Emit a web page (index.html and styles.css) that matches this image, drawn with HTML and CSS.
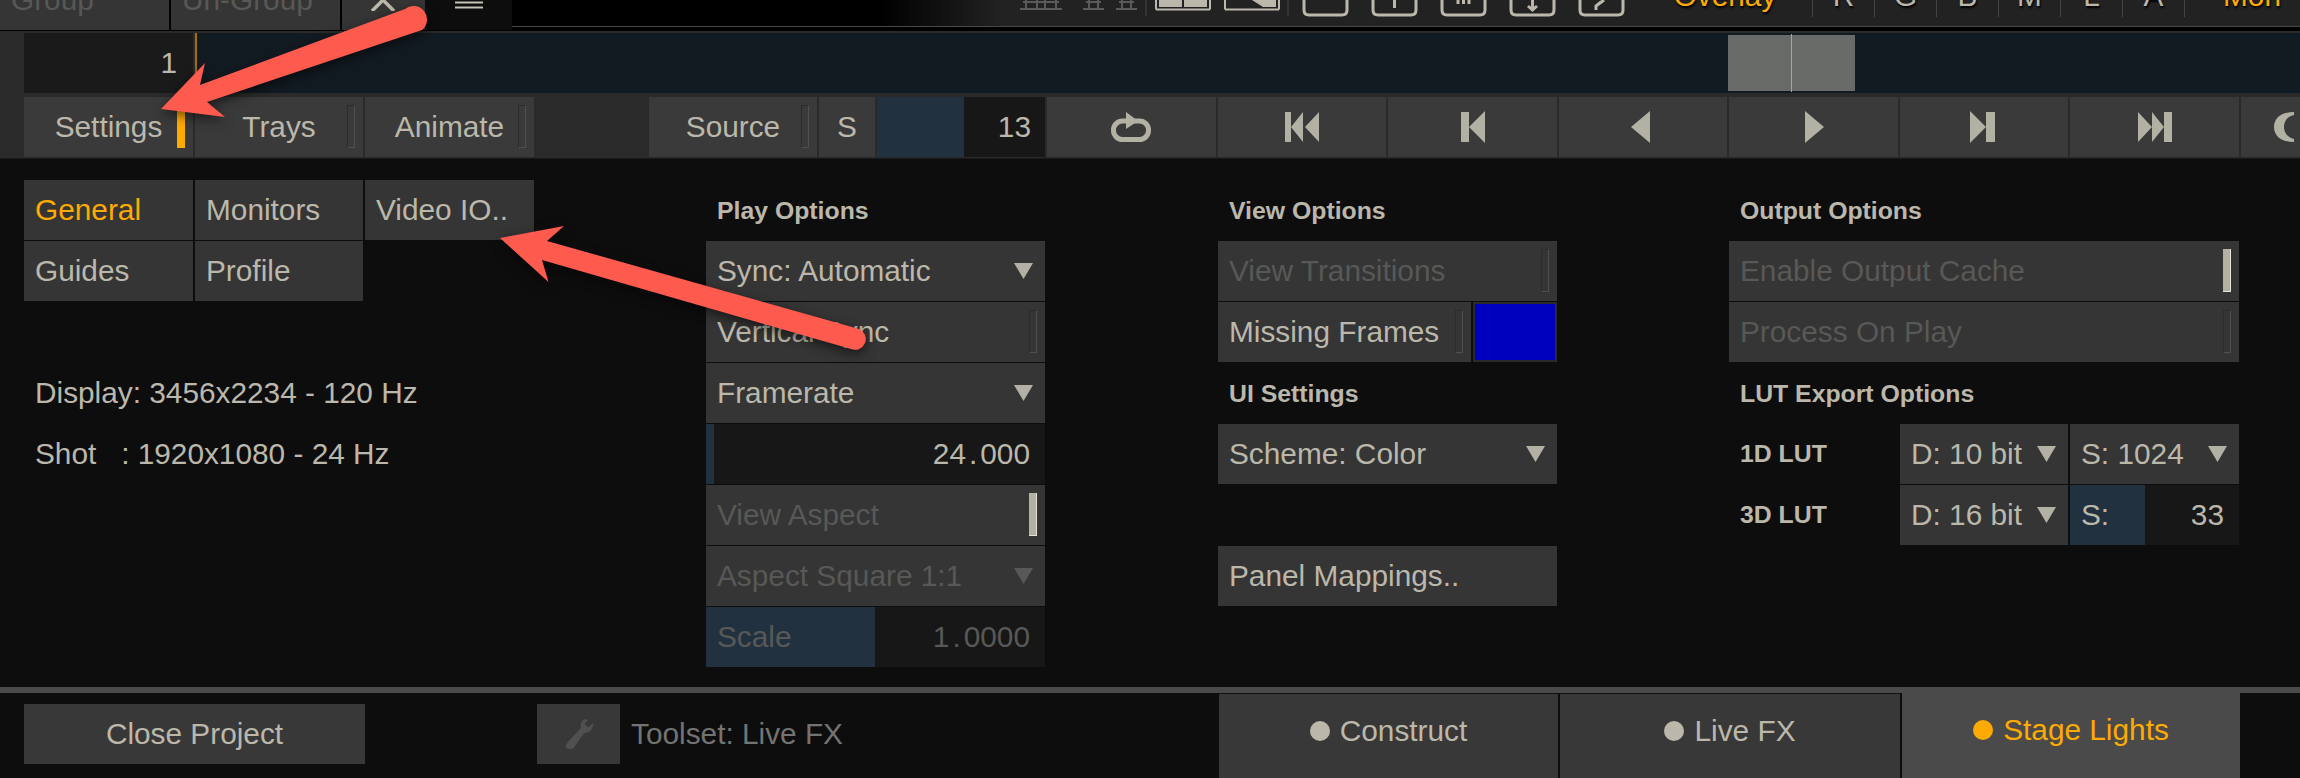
FILE: index.html
```html
<!DOCTYPE html>
<html lang="en">
<head>
<meta charset="utf-8">
<title>Settings</title>
<link rel="stylesheet" href="styles.css">
</head>
<body>
<div class="app">
  <header class="topbar">
    <div class="top-btn w-group dim">Group</div>
    <div class="top-btn w-ungroup dim">Un-Group</div>
    <div class="top-btn w-x">
      <svg class="x-icon" width="26" height="11" viewBox="0 0 26 11"><path d="M2 11 L13 0 L24 11" fill="none" stroke="#bbb8ab" stroke-width="3.500"/></svg>
    </div>
    <div class="top-menu">
      <svg width="28" height="10" viewBox="0 0 28 10"><path d="M0 2.500H28M0 7.500H28" stroke="#c4c1b5" stroke-width="2"/></svg>
    </div>
    <div class="top-right">
      <svg class="icon-strip" width="618" height="26" viewBox="0 0 618 26">
        <g fill="none" stroke="#5a5a58" stroke-width="2">
          <path d="M0 9H42M3 2H39M6 0V9M17 0V9M25 0V9M36 0V9"/>
          <path d="M63 9H84M66 2H81M69 0V9M78 0V9"/>
          <path d="M96 9H117M99 2H114M102 0V9M111 0V9"/>
        </g>
        <path d="M126 0V16M268 0V16" stroke="#444" stroke-width="1"/>
        <g fill="#bbb8ab">
          <path d="M139 0H162V7H139ZM164 0H187V7H164Z"/>
          <path d="M208 0H256V7H243L232 0Z"/>
        </g>
        <path d="M136 9.500H190M136 0V9.500M190 0V9.500M205 9.500H259M205 0V9.500M259 0V9.500" fill="none" stroke="#bbb8ab" stroke-width="2"/>
        <g fill="none" stroke="#bbb8ab" stroke-width="3">
          <path d="M284 -4V10Q284 15 289 15H322Q327 15 327 10V-4"/>
          <path d="M353 -4V10Q353 15 358 15H391Q396 15 396 10V-4"/>
          <path d="M422 -4V10Q422 15 427 15H460Q465 15 465 10V-4"/>
          <path d="M491 -4V10Q491 15 496 15H529Q534 15 534 10V-4"/>
          <path d="M560 -4V10Q560 15 565 15H598Q603 15 603 10V-4"/>
          <path d="M374.500 0V8M438 0V4M443.500 0V4M449 0V4M512.500 0V9M508 6L512.500 10L517 6M581 2L576 6V10M576 6L584 0"/>
        </g>
      </svg>
      <div class="ch ch-wide on">Overlay</div>
      <div class="ch">R</div>
      <div class="ch">G</div>
      <div class="ch">B</div>
      <div class="ch">M</div>
      <div class="ch">L</div>
      <div class="ch">A</div>
      <div class="ch ch-mon on">Mon</div>
    </div>
  </header>

  <div class="deck">
    <div class="timeline">
      <div class="frame">1</div>
      <div class="track">
        <div class="clip"><span class="playhead"></span></div>
      </div>
    </div>
    <div class="toolbar">
      <div class="tool">Settings<i class="led led-on"></i></div>
      <div class="tool">Trays<i class="led"></i></div>
      <div class="tool">Animate<i class="led"></i></div>
      <div class="spacer"></div>
      <div class="tool">Source<i class="led"></i></div>
      <div class="tool">S</div>
      <div class="slider tool-slider" style="--v:87px"><span></span><span>13</span></div>
      <div class="tool"><svg class="nudge-l2" width="40" height="30" viewBox="0 0 40 30"><rect x="2.500" y="9" width="35" height="18.500" rx="9" fill="none" stroke="#b3b0a4" stroke-width="5"/><path d="M15 0L27 9L15 17Z" fill="#b3b0a4"/></svg></div>
      <div class="tool"><svg width="34" height="30" viewBox="0 0 34 30"><path d="M0 0H6V30H0ZM18 0V30L6 15ZM34 0V30L20 15Z" fill="#b3b0a4"/></svg></div>
      <div class="tool"><svg width="24" height="32" viewBox="0 0 24 32"><path d="M0 1H8V31H0ZM24 0V32L8 16Z" fill="#b3b0a4"/></svg></div>
      <div class="tool"><svg class="nudge-l5" width="19" height="32" viewBox="0 0 19 32"><path d="M19 0V32L0 16Z" fill="#b3b0a4"/></svg></div>
      <div class="tool"><svg class="nudge-r2" width="19" height="32" viewBox="0 0 19 32"><path d="M0 0V32L19 16Z" fill="#b3b0a4"/></svg></div>
      <div class="tool"><svg class="nudge-l3" width="25" height="32" viewBox="0 0 25 32"><path d="M0 0V32L16 16ZM16 1H25V31H16Z" fill="#b3b0a4"/></svg></div>
      <div class="tool"><svg width="34" height="30" viewBox="0 0 34 30"><path d="M0 0V30L14 15ZM14 0V30L26 15ZM26 0H34V30H26Z" fill="#b3b0a4"/></svg></div>
      <div class="tool tool-end"><svg width="20" height="30" viewBox="0 0 20 30"><path d="M20 0C6 0 0 7 0 15C0 23 6 30 20 30V27C14 26 10 21 10 15C10 9 14 4 20 3Z" fill="#b3b0a4"/></svg></div>
    </div>
  </div>

  <main class="panel">
    <section class="col col-wide">
      <div class="btn on">General</div>
      <div class="btn">Monitors</div>
      <div class="btn">Video IO..</div>
      <div class="btn">Guides</div>
      <div class="btn">Profile</div>
      <div class="row-skip"></div>
      <div class="info">Display: 3456x2234 - 120 Hz</div>
      <div class="info">Shot&nbsp;&nbsp;&nbsp;: 1920x1080 - 24 Hz</div>
    </section>

    <section class="col">
      <h2 class="head">Play Options</h2>
      <div class="btn">Sync: Automatic<b class="tri"></b></div>
      <div class="btn">Vertical Sync<i class="led"></i></div>
      <div class="btn">Framerate<b class="tri"></b></div>
      <div class="slider" style="--v:8px"><span></span><span>24<em>.</em>000</span></div>
      <div class="btn dim">View Aspect<i class="led led-white"></i></div>
      <div class="btn dim">Aspect Square 1:1<b class="tri tri-dim"></b></div>
      <div class="slider dim" style="--v:169px"><span>Scale</span><span>1<em>.</em>0000</span></div>
    </section>

    <section class="col col-view">
      <h2 class="head">View Options</h2>
      <div class="btn dim">View Transitions<i class="led"></i></div>
      <div class="pair">
        <div class="btn">Missing Frames<i class="led"></i></div>
        <div class="swatch"><span></span></div>
      </div>
      <h2 class="head">UI Settings</h2>
      <div class="btn">Scheme: Color<b class="tri"></b></div>
      <div class="row-blank"></div>
      <div class="btn">Panel Mappings..</div>
    </section>

    <section class="col col-output">
      <h2 class="head">Output Options</h2>
      <div class="btn dim">Enable Output Cache<i class="led led-white"></i></div>
      <div class="btn dim">Process On Play<i class="led"></i></div>
      <h2 class="head">LUT Export Options</h2>
      <div class="lut">
        <h3 class="lut-label">1D LUT</h3>
        <div class="btn">D: 10 bit<b class="tri"></b></div>
        <div class="btn">S: 1024<b class="tri"></b></div>
      </div>
      <div class="lut">
        <h3 class="lut-label">3D LUT</h3>
        <div class="btn">D: 16 bit<b class="tri"></b></div>
        <div class="slider" style="--v:75px"><span>S:</span><span>33</span></div>
      </div>
    </section>
  </main>

  <footer class="footer">
    <div class="close-btn">Close Project</div>
    <div class="wrench">
      <svg width="31" height="31" viewBox="0 0 31 31"><path d="M22 0C18 2 17 5 18 9L5 23C2 26 2 30 6 30C9 31 11 29 12 27L21 14C26 14 31 10 30 4L26 8L23 7L22 4L25 1Z" fill="#505050"/></svg>
    </div>
    <div class="toolset">Toolset: Live FX</div>
    <nav class="tabs">
      <div class="tab"><i class="dot"></i>Construct</div>
      <div class="tab"><i class="dot"></i>Live FX</div>
      <div class="tab tab-active"><i class="dot"></i>Stage Lights</div>
    </nav>
  </footer>

  <svg class="arrows" width="2300" height="778" viewBox="0 0 2300 778">
    <path d="M161 109L205 63L200 85L405 9A11.500 11.500 0 0 1 422 30L207 102L225 117Z" fill="#ff5a4e"/>
    <path d="M500 238L564 226L547 241L859 329A10.500 10.500 0 0 1 851 349L542 260L548.500 282Z" fill="#ff5a4e"/>
  </svg>
</div>
</body>
</html>
```

FILE: styles.css
```css
* { box-sizing: border-box; }

html, body {
  margin: 0;
  padding: 0;
  background: #0d0d0d;
}

.app {
  position: relative;
  display: flex;
  flex-direction: column;
  width: 2300px;
  height: 778px;
  overflow: hidden;
  font-family: "Liberation Sans", Arial, sans-serif;
  font-size: 29.8px;
  color: #bbb8ab;
  background: #0d0d0d;
}

.dim { color: #585856; }
.on { color: #ffaa00; }

/* top bar */
.topbar {
  display: flex;
  height: 31px;
  flex: none;
  background: #000;
  overflow: hidden;
}

.top-btn {
  display: flex;
  align-items: center;
  height: 60px;
  margin-top: -30px;
  margin-right: 2px;
  padding-left: 11px;
  background: #353535;
  flex: none;
}

.w-group { width: 169px; }
.w-ungroup { width: 169px; }
.w-x { width: 83px; margin-right: 0; padding: 30px 0 0 28px; align-items: flex-start; }

.top-menu {
  width: 87px;
  height: 30px;
  flex: none;
  display: flex;
  justify-content: center;
  background: #0d0d0d;
}

.top-menu svg { margin-left: 1px; }

.top-right {
  display: flex;
  align-items: flex-start;
  flex: 1;
  height: 27px;
  padding-left: 508px;
  border-bottom: 1px solid #4a4a4a;
  background: linear-gradient(90deg, #000 368px, #222 490px);
}

.icon-strip { flex: none; }

.ch {
  width: 62px;
  height: 17px;
  flex: none;
  display: flex;
  align-items: flex-end;
  justify-content: center;
  line-height: 42px;
  border-right: 1px solid #444;
  text-shadow: 1px 2px 2px #000;
}

.ch-wide { width: 175px; }
.ch-mon { width: 134px; border-right: 0; }

/* timeline and transport */
.deck {
  flex: none;
  height: 127px;
  padding: 2px 0 1px 24px;
  background: #2a2a2a;
}

.timeline {
  display: flex;
  height: 60px;
  margin-bottom: 4px;
}

.frame {
  width: 169px;
  flex: none;
  padding-right: 16px;
  line-height: 60px;
  text-align: right;
  background: #1a1a1a;
}

.track {
  position: relative;
  flex: 1;
  margin-left: 2px;
  padding-left: 2px;
  border-left: 2px solid #a86f00;
  background: #121a22;
}

.clip {
  position: absolute;
  left: 1531px;
  top: 2px;
  width: 127px;
  height: 56px;
  background: #676a67;
}

.playhead {
  position: absolute;
  left: 63px;
  top: -1px;
  width: 1px;
  height: 58px;
  background: #a3a5a0;
}

.toolbar {
  display: grid;
  grid-template-columns: 169px 168px 169px 111px 168px 56px 168px 169px 168px 169px 168px 169px 168px 169px 59px;
  column-gap: 2px;
  height: 60px;
}

.tool {
  position: relative;
  display: flex;
  align-items: center;
  justify-content: center;
  background: #3a3a3a;
}

.tool-end { justify-content: flex-start; padding-left: 33px; }
.slider.tool-slider { padding-right: 14px; }

.nudge-l2 { margin-right: 2px; }
.nudge-l3 { margin-right: 3px; }
.nudge-l5 { margin-right: 5px; }
.nudge-r2 { margin-left: 2px; }

.led {
  position: absolute;
  top: 8px;
  right: 8px;
  width: 8px;
  height: 43px;
  border: 1px solid #2b2b2b;
  border-right-color: #4f4f4f;
  border-bottom-color: #4f4f4f;
}

.led-on { background: #ffaa00; border-color: #ffaa00; }
.led-white { background: #b3b0a4; border: 0; border-right: 1px solid #e6e3d6; border-bottom: 1px solid #e6e3d6; }

/* settings panel */
.panel {
  flex: none;
  display: flex;
  height: 529px;
  padding: 21px 0 0 24px;
  border-top: 1px solid #1a1a1a;
}

.col {
  display: grid;
  grid-template-columns: 339px;
  grid-auto-rows: 60px;
  row-gap: 1px;
  margin-left: 172px;
}

.col-wide {
  grid-template-columns: 169px 168px 169px;
  column-gap: 2px;
  margin-left: 0;
}

.col-view { margin-left: 173px; }
.col-output { grid-template-columns: 510px; }

.btn {
  position: relative;
  display: flex;
  align-items: center;
  justify-content: space-between;
  padding: 0 12px 0 11px;
  white-space: pre;
  background: #353535;
}

.head {
  margin: 0;
  padding-left: 11px;
  font-size: 24.8px;
  font-weight: bold;
  line-height: 61px;
}

.row-skip { grid-column: 1 / -1; grid-row: 3; }

.info {
  grid-column: 1 / -1;
  padding-left: 11px;
  line-height: 60px;
  white-space: pre;
}

.row-blank { height: 60px; }

.tri {
  flex: none;
  width: 19px;
  height: 16px;
  clip-path: polygon(0 0, 100% 0, 50% 100%);
  background: #b3b0a4;
}

.tri-dim { background: #585856; }

.slider {
  display: flex;
  align-items: center;
  justify-content: space-between;
  padding: 0 15px 0 11px;
  background: linear-gradient(90deg, #223140 var(--v), #171717 0);
}

.slider em {
  margin: 0 3px;
  font-style: normal;
}

.pair {
  display: grid;
  grid-template-columns: 253px 84px;
  column-gap: 2px;
}

.swatch {
  padding: 2px;
  background: #2a2a2a;
}

.swatch span {
  display: block;
  height: 100%;
  background: #0000bf;
}

.lut {
  display: grid;
  grid-template-columns: 169px 168px 169px;
  column-gap: 2px;
}

.lut-label {
  margin: 0;
  padding-left: 11px;
  font-size: 24.8px;
  line-height: 60px;
}

/* footer */
.footer {
  flex: 1;
  display: flex;
  align-items: flex-start;
  padding: 11px 0 0 24px;
  border-top: 6px solid #4a4a4a;
}

.close-btn {
  width: 341px;
  height: 60px;
  line-height: 60px;
  text-align: center;
  background: #383838;
}

.wrench {
  display: flex;
  align-items: center;
  justify-content: center;
  width: 83px;
  height: 60px;
  margin-left: 172px;
  background: #383838;
}

.toolset {
  margin-left: 11px;
  width: 588px;
  flex: none;
  line-height: 60px;
  color: #737371;
}

.tabs {
  display: grid;
  grid-template-columns: 339px 340px 338px;
  column-gap: 2px;
  height: 84px;
  margin: -11px 0 0 0;
}

.tab {
  display: flex;
  align-items: center;
  justify-content: center;
  gap: 10px;
  padding-bottom: 10px;
  border-top: 1px solid #111;
  background: #383838;
}

.tab-active {
  height: 91px;
  margin-top: -6px;
  border-top: 0;
  padding-bottom: 6px;
  color: #ffaa00;
  background: #4a4a4a;
}

.dot {
  width: 20px;
  height: 20px;
  border-radius: 50%;
  background: currentColor;
}

/* callout arrows drawn over the screenshot */
.arrows {
  position: absolute;
  left: 0;
  top: 0;
  pointer-events: none;
  filter: drop-shadow(0 4px 6px rgba(0, 0, 0, 0.55));
}
```
